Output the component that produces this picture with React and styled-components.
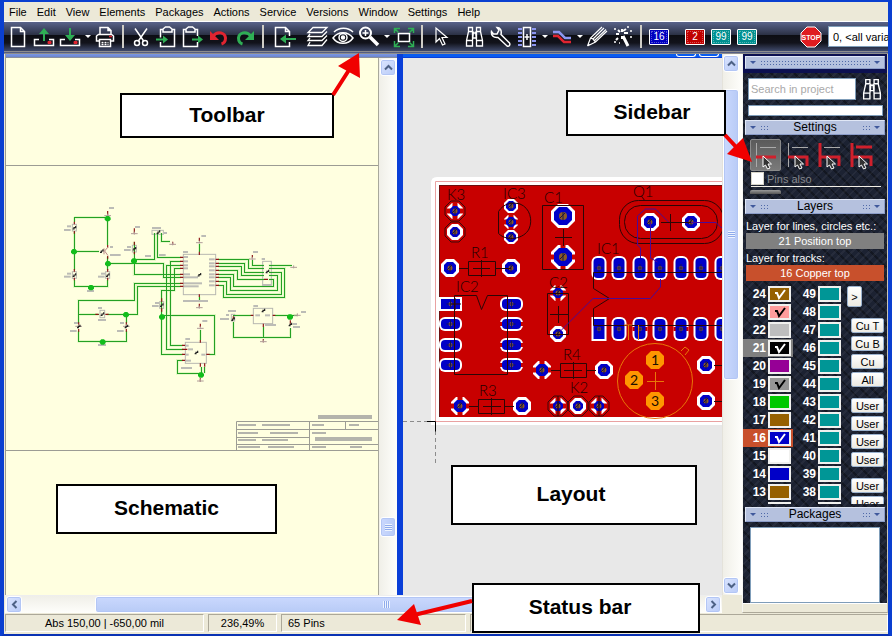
import React from "react";
import styled, { createGlobalStyle, css } from "styled-components";

const Global = createGlobalStyle`
  * { box-sizing: border-box; }
  body { margin: 0; background: #ece9d8; }
  body, button, input, select { font-family: "Liberation Sans", Arial, sans-serif; font-size: 11px; }
  button { margin: 0; padding: 0; cursor: default; }
  svg { display: block; flex: none; }
`;

/* ---------- window frame ---------- */

const Frame = styled.div`
  position: relative;
  display: flex;
  flex-direction: column;
  min-height: 100vh;
  overflow: hidden;
  border: 4px solid #0a3fd0;
  border-top-width: 2px;
  border-bottom: 3px solid #0a32b4;
  background: #ece9d8;
`;

const MenuBar = styled.nav`
  display: flex;
  height: 20px;
  border-bottom: 1px solid #fff;
`;

const MenuItem = styled.button`
  border: 0;
  padding: 0 5px;
  background: none;
  color: #000;
`;

const ToolStrip = styled.div`
  display: flex;
  align-items: center;
  height: 32px;
  padding-left: 1px;
  border-bottom: 3px double #8d8d8d;
  background: linear-gradient(#59638a 0, #2a3044 45%, #0c0d13 46%, #12131b 72%, #3f4a6b 100%);
`;

const ToolButton = styled.button`
  flex: none;
  display: grid;
  place-items: center;
  width: 26px;
  height: 26px;
  border: 0;
  background: none;
`;

const CaretButton = styled.button`
  flex: none;
  display: grid;
  place-items: center;
  width: 9px;
  height: 26px;
  border: 0;
  background: none;
  &::before {
    content: "";
    border: 3px solid transparent;
    border-top-color: #fff;
    border-bottom: 0;
  }
`;

const Separator = styled.span`
  flex: none;
  width: 2px;
  height: 23px;
  margin: 0 4px;
  background: #cfcdc6;
`;

const Gap = styled.span`
  flex: none;
  width: ${(p) => p.$w}px;
`;

const Chip = styled.span`
  display: grid;
  place-items: center;
  width: 20px;
  height: 16px;
  border: 1px solid #fff;
  border-radius: 1px;
  background: ${(p) => p.$color};
  color: #fff;
  font-size: 10px;
  line-height: 12px;
  outline: 1px dotted #ffffff55;
  outline-offset: -3px;
`;

const VariantSelect = styled.select`
  flex: 1;
  min-width: 0;
  height: 21px;
  margin-left: 4px;
  padding: 0 0 0 4px;
  border: 1px solid #7f9db9;
  border-right: 0;
  border-radius: 0;
  background: #fff;
  color: #000;
  appearance: none;
  text-overflow: clip;
`;

/* ---------- work area ---------- */

const Main = styled.div`
  flex: 1;
  display: flex;
  min-height: 0;
`;

const Documents = styled.main`
  flex: 1;
  min-width: 0;
  display: flex;
  flex-direction: column;
  padding-left: 1px;
`;

const Panes = styled.div`
  flex: 1;
  display: grid;
  grid-template-columns: minmax(0, 392fr) minmax(0, 345fr);
  min-height: 0;
`;

const Pane = styled.section`
  display: grid;
  grid-template-columns: minmax(0, 1fr) ${(p) => (p.$active ? 20 : 19)}px;
  grid-template-rows: 4px minmax(0, 1fr);
  border-left: ${(p) => (p.$active ? "6px solid #0a3fd8" : "1px solid #9a9a90")};
  background: #f4f3ee;
`;

const TitleEdge = styled.div`
  display: flex;
  justify-content: flex-end;
  gap: 3px;
  padding-right: 3px;
  grid-column: 1 / ${(p) => (p.$full ? 3 : 2)};
  background: ${(p) => (p.$full ? "linear-gradient(#7b98e2, #6a84d0)" : "#0a5cf0")};
  border-bottom: 1px solid ${(p) => (p.$full ? "#8a8f9c" : "#0a3fd8")};
`;

const TitleButtonEdge = styled.span`
  width: 20px;
  height: 3px;
  border: 1px solid #fff;
  border-top: 0;
  border-radius: 0 0 3px 3px;
`;

const Canvas = styled.div`
  grid-row: 2;
  min-width: 0;
  height: 537px;
  min-height: 100%;
  overflow: hidden;
  background: ${(p) => p.$color};
`;

const VScroll = styled.div`
  grid-column: 2;
  grid-row: ${(p) => (p.$tall ? "1 / 3" : "2")};
  display: flex;
  flex-direction: column;
  padding: 1px ${(p) => (p.$tall ? 3 : 1)}px 1px ${(p) => (p.$tall ? 0 : 1)}px;
  border-left: 1px solid ${(p) => (p.$tall ? "#e4e2da" : "#a8a89c")};
  background: linear-gradient(90deg, #f0efe8, #fefefb);
`;

const scrollFace = css`
  border: 1px solid #fff;
  border-radius: 3px;
  box-shadow: inset 0 0 0 1px #b3c6f5;
`;

const ScrollButton = styled.button`
  ${scrollFace}
  flex: none;
  display: grid;
  place-items: center;
  width: 16px;
  height: 17px;
  background: linear-gradient(135deg, #dbe5fe, #b9cbf8);
`;

const Track = styled.div`
  flex: 1;
  min-width: 0;
  min-height: 0;
  display: flex;
  flex-direction: ${(p) => (p.$h ? "row" : "column")};
`;

const Space = styled.div`
  flex: ${(p) => p.$n} 1 0;
`;

const Thumb = styled.div`
  ${scrollFace}
  flex: ${(p) => p.$n} 1 0;
  display: grid;
  place-items: center;
  background: linear-gradient(${(p) => (p.$h ? "180deg" : "90deg")}, #cad8fe, #b8cbf6);
  &::after {
    content: "";
    width: 7px;
    height: 7px;
    background: repeating-linear-gradient(${(p) => (p.$h ? "90deg" : "180deg")}, #eef4fe 0 1px, #8fabec 1px 2px);
  }
`;

const HScroll = styled.div`
  display: flex;
  height: 18px;
  margin-right: 20px;
  padding: 0 1px;
  border-top: 1px solid #eee;
  background: linear-gradient(#f0efe8, #fefefb);
`;

/* ---------- sidebar ---------- */

const Side = styled.aside`
  flex: none;
  display: flex;
  flex-direction: column;
  width: 146px;
  border-left: 1px solid #f6f6f2;
  border-right: 1px solid #c8c5b8;
  border-bottom: 1px solid #aca899;
  color: #fff;
  background:
    repeating-linear-gradient(135deg, #ffffff0c 0 2px, transparent 2px 6px),
    repeating-linear-gradient(45deg, #00000055 0 2px, transparent 2px 8px),
    #1c2232;
`;

const SideHead = styled.h2`
  display: flex;
  align-items: center;
  justify-content: space-between;
  height: ${(p) => (p.$slim ? 13 : 15)}px;
  margin: 0 2px;
  padding: 0 4px;
  border: 1px solid #e0e7f6;
  border-right-color: #8b9cc8;
  border-bottom-color: #8b9cc8;
  background: #b5c1de;
  color: #000;
  font-size: 12px;
  font-weight: 400;
  line-height: 13px;
`;

const HeadTop = styled.div`
  padding: 2px 0 4px;
  background: #0c1050;
`;

const Dots = styled.span`
  flex: ${(p) => (p.$wide ? 1 : "none")};
  width: 8px;
  height: 6px;
  background-image: radial-gradient(circle, #5069a8 1px, transparent 1px);
  background-size: 3px 3px;
`;

const HeadMark = styled.span`
  display: flex;
  align-items: center;
  gap: 4px;
  flex: ${(p) => (p.$wide ? 1 : "none")};
`;

const Triangle = styled.span`
  border: 3px solid transparent;
  border-top-color: #40599c;
  border-bottom: 0;
`;

const SearchRow = styled.form`
  display: flex;
  align-items: center;
  gap: 5px;
  margin: 4px 4px 0 5px;
`;

const SearchInput = styled.input`
  flex: 1;
  min-width: 0;
  height: 22px;
  padding: 0 2px;
  border: 1px solid #7f9db9;
  background: #fff;
  &::placeholder { color: #a9a9a9; opacity: 1; }
`;

const SearchButton = styled.button`
  width: 22px;
  height: 24px;
  border: 0;
  background: none;
`;

const ResultBox = styled.div`
  height: 11px;
  margin: 4px 4px 4px 5px;
  border: 1px solid #7f9db9;
  background: #fff;
`;

const ModeRow = styled.div`
  display: flex;
  gap: 1px;
  padding: 4px 7px 0;
`;

const ModeButton = styled.button`
  width: 31px;
  height: 32px;
  border: 1px solid ${(p) => (p.$on ? "#8a8a8a" : "transparent")};
  border-radius: 2px;
  background: ${(p) => (p.$on ? "linear-gradient(#5a5a5a, #7a7a7a)" : "none")};
`;

const CheckLabel = styled.label`
  display: flex;
  align-items: center;
  gap: 3px;
  height: 16px;
  margin: 0 6px 0 8px;
  border-bottom: 1px solid #f2efe6;
  color: #85878c;
`;

const CheckBox = styled.input`
  appearance: none;
  width: 13px;
  height: 13px;
  margin: 0;
  border: 1px solid #d8d5c8;
  background: #fff;
`;

const Stub = styled.div`
  width: 31px;
  height: 4px;
  margin: 3px 0 5px 7px;
  border-radius: 2px 2px 0 0;
  background: linear-gradient(#9a9a9a, #555);
`;

const LayerCaption = styled.div`
  height: ${(p) => p.$h}px;
  padding: ${(p) => p.$h - 13}px 0 0 3px;
  line-height: 13px;
  white-space: nowrap;
`;

const LayerBar = styled.button`
  height: 16px;
  margin: 0 3px;
  border: 0;
  background: ${(p) => p.$color};
  color: #fff;
  line-height: 16px;
`;

const LayerList = styled.div`
  display: flex;
  height: 219px;
  margin: 4px 0 3px;
  overflow: hidden;
`;

const LayerColumn = styled.div`
  flex: none;
  width: 50px;
`;

const LayerRow = styled.button`
  display: flex;
  align-items: center;
  justify-content: flex-end;
  gap: 2px;
  width: 50px;
  height: 18px;
  padding-right: 2px;
  border: 0;
  background: ${(p) => p.$row || "none"};
  color: #fff;
  font-size: 12px;
  font-weight: 700;
`;

const Swatch = styled.span`
  width: 23px;
  height: 16px;
  border: 2px solid #f0f0ee;
  background: ${(p) => p.$color};
`;

const SetColumn = styled.div`
  flex: 1;
  display: flex;
  flex-direction: column;
  align-items: flex-end;
  gap: 3px;
  padding: 1px 3px 0 0;
`;

const XpButton = styled.button`
  flex: none;
  width: ${(p) => (p.$narrow ? 15 : 33)}px;
  height: ${(p) => (p.$narrow ? 21 : 15)}px;
  margin: ${(p) => p.$top || 0}px ${(p) => (p.$narrow ? 22 : 0)}px 0 0;
  border: 1px solid #9db4cf;
  border-radius: 2px;
  background: linear-gradient(#fff, #eceae2);
  color: #000;
  line-height: 12px;
`;

const PackageBox = styled.div`
  flex: 1;
  min-height: 76px;
  margin: 5px 7px 0;
  border: 1px solid #7f9db9;
  background: #fff;
`;

const SideFoot = styled.div`
  height: 9px;
  border-top: 1px solid #fff;
  background: #ece9d8;
`;

const StatusBar = styled.footer`
  display: flex;
  gap: 4px;
  height: 21px;
  padding: 1px 0 2px 1px;
`;

const StatusCell = styled.div`
  flex: ${(p) => (p.$w ? "none" : 1)};
  width: ${(p) => p.$w || 0}px;
  padding: 0 6px;
  border: 1px solid #aca899;
  border-right-color: #fff;
  border-bottom-color: #fff;
  line-height: 17px;
  text-align: ${(p) => p.$align || "left"};
`;

/* ---------- callouts lying over the window ---------- */

const Callout = styled.div`
  position: absolute;
  left: ${(p) => p.$x}px;
  top: ${(p) => p.$y}px;
  display: grid;
  place-items: center;
  width: ${(p) => p.$w}px;
  height: ${(p) => p.$h}px;
  padding-left: ${(p) => p.$shift || 0}px;
  padding-right: ${(p) => p.$back || 0}px;
  padding-bottom: 2px;
  border: 2px solid #000;
  background: #fff;
  color: #000;
  font-size: 21px;
  font-weight: 700;
`;

const Arrows = styled.svg`
  position: absolute;
  left: -4px;
  top: -2px;
  pointer-events: none;
`;

/* ---------- icons ---------- */

const G = "#2fae55";
const R = "#e02430";

const Ico = ({ children, w = 1.5 }) => (
  <svg width="26" height="26" viewBox="0 0 26 26" fill="none" stroke="#fff" strokeWidth={w}>{children}</svg>
);
const cursorPath = "M9 4v14l3.500-3.500 3 6.500 2.500-1-3-6.500h5z";

const icons = {
  New: <Ico><path d="M6.500 3.500h9l4 4v15h-13zM15.500 3.500v4h4" /></Ico>,
  Open: <Ico><path d="M8 15.500H3.500v6h19v-6H18" /><path d="M13 17V7" stroke={G} strokeWidth="2" /><path d="M8 10l5-6 5 6z" fill={G} stroke="none" /><path d="M17 17.500h3v2h-3z" fill={R} stroke={R} strokeWidth="1" /></Ico>,
  Save: <Ico><path d="M8 15.500H3.500v6h19v-6H18" /><path d="M13 4v10" stroke={G} strokeWidth="2" /><path d="M8 11h10l-5 6z" fill={G} stroke="none" /><path d="M17 17.500h3v2h-3z" fill={R} stroke={R} strokeWidth="1" /></Ico>,
  Print: <Ico><path d="M8 11V3.500h8l3 3V11M16 3.500v3h3M8 17H4.500v-5l2-1.500h13l2 1.500v5H18" /><path d="M7.500 15.500h11v7h-11z" /><path d="M9.500 18.500h7M9.500 20.500h7" strokeDasharray="2 1" /><path d="M17 12.500h3" stroke={R} /></Ico>,
  Cut: <Ico><path d="M7 4.500l9 13M19 4.500l-9 13" /><circle cx="9" cy="19" r="2.500" /><circle cx="17" cy="19" r="2.500" /></Ico>,
  Copy: <Ico><path d="M9 5.500H6.500v8M6.500 18v4.500h14v-17H18M9 8V5l2.500-2h4L18 5v3z" /><path d="M2 15.500h9" stroke={G} strokeWidth="2" /><path d="M9 11.500l5 4-5 4z" fill={G} stroke="none" /></Ico>,
  Paste: <Ico><path d="M6 5.500H3.500v17h14V18M17.500 12V5.500H15M6 8V5l2.500-2h4L15 5v3z" /><path d="M12 15.500h9" stroke={G} strokeWidth="2" /><path d="M18 11.500l5 4-5 4z" fill={G} stroke="none" /></Ico>,
  Undo: <Ico><path d="M7 12C12 6 19 9 19.500 14c0 3-1 5-4 6" stroke={R} strokeWidth="3" /><path d="M4 7v9h9z" fill={R} stroke="none" /></Ico>,
  Redo: <Ico><path d="M19 12C14 6 7 9 6.500 14c0 3 1 5 4 6" stroke={G} strokeWidth="3" /><path d="M22 7v9h-9z" fill={G} stroke="none" /></Ico>,
  Import: <Ico><path d="M17.500 12V7.500l-4-4h-10v19h14V18M13.500 3.500v4h4" /><path d="M12 15h12" stroke={G} strokeWidth="2" /><path d="M14 10.500v9L8 15z" fill={G} stroke="none" /></Ico>,
  Layers: <Ico w="1.300"><path d="M9 3.500h14l-5 5H4zM6 10l-2 2.500h14l5-5M6 14l-2 2.500h14l5-5M6 18l-2 3.500h14l5-6" /></Ico>,
  View: <Ico><path d="M4 8c5-5 14-5 19 0M3 14c5-7 15-7 20 0-5 7-15 7-20 0z" /><circle cx="13" cy="13.500" r="4" /><circle cx="13" cy="13.500" r="1.500" fill="#fff" /></Ico>,
  Zoom: <Ico><circle cx="9.500" cy="9" r="5.500" strokeWidth="2" /><path d="M6.500 9h6M9.500 6v6" /><path d="M14 13l8 8" strokeWidth="3.500" /></Ico>,
  Fit: <Ico><path d="M7.500 9.500h11v8h-11z" /><path d="M3.500 9V4.500H9M3.500 4.500l4 4M17 4.500h5.500V9M22.500 4.500l-4 4M3.500 17v5.500H9M3.500 22.500l4-4M17 22.500h5.500V17M22.500 22.500l-4-4" stroke={G} /></Ico>,
  Select: <Ico w="1.200"><path d={cursorPath} /></Ico>,
  Find: <Ico w="1.300"><path d="M6.500 3.500h4v4h-4zM14.500 3.500h4v4h-4zM6.500 7.500l-2 9v5.500h6v-5.500l1-9M18.500 7.500l2 9v5.500h-6v-5.500l-1-9M10.500 9h4v5h-4zM4.500 16.500h6M14.500 16.500h6" /></Ico>,
  Tools: <Ico><path d="M9 3.500L11 6l-2 4-3.500 0-2-2.500C3 11 5 14 10 13.500l9 8.500c2 1 3.500-1 2.500-3L13 10.500C14 6 12 3.500 9 3.500z" /></Ico>,
  Part: <Ico><path d="M9.500 3.500h7v19h-7z" /><path d="M13 10v6M10.500 13h5" /><path d="M4 5h4M4 9h4M4 13h4M4 17h4M4 21h4M18 5h4M18 9h4M18 13h4M18 17h4M18 21h4" stroke="#8c96f0" strokeWidth="2" /></Ico>,
  Track: <Ico w="2"><path d="M4 8h6l6 6h6" stroke="#8c96f0" strokeWidth="2.500" /><path d="M4 12h5l6 6h7" stroke={R} strokeWidth="2.500" /></Ico>,
  Draw: <Ico w="1.200"><path d="M3.500 22l3-8L18 3M3.500 22l8-4L23 7M6.500 14l2.500 1 2.500 3M9 15L20 4M10 17L22 5.500M4 20l2 1" /></Ico>,
  Magic: <Ico><path d="M13 12l5 10" strokeWidth="3" /><path d="M12 5v3M12 12v3M6 10h3M13 7l3-2M8 14l-2 2M8 6l2 2M14 9h4" strokeWidth="2" /><path d="M4 5h2M17 3h2M20 7h2M4 18h2M9 19h1M20 13h2" strokeWidth="1.500" /></Ico>,
};

const Tool = ({ name }) => <ToolButton aria-label={name} title={name}>{icons[name]}</ToolButton>;
const LayerChip = ({ color, n }) => <ToolButton aria-label={`Layer ${n}`}><Chip $color={color}>{n}</Chip></ToolButton>;

const StopIcon = () => (
  <svg width="22" height="22" viewBox="0 0 22 22">
    <path d="M7 1h8l6 6v8l-6 6H7l-6-6V7z" fill="#df1c20" stroke="#fff" />
    <text x="11" y="14" fill="#fff" fontSize="7" fontWeight="700" textAnchor="middle">STOP</text>
  </svg>
);

const Chevron = ({ d }) => (
  <svg width="9" height="9" viewBox="0 0 9 9" fill="none" stroke="#4d6185" strokeWidth="2"><path d={d} /></svg>
);
const up = "M1 6.500L4.500 3 8 6.500";
const down = "M1 2.500L4.500 6 8 2.500";
const left = "M6.500 1L3 4.500 6.500 8";
const right = "M2.500 1L6 4.500 2.500 8";

const modeLines = [
  { grey: "M5.500 3v24M9 7.500h16", red: "M5 17h20" },
  { grey: "M5.500 3v24M9 7.500h16", red: "M5 17h19v9" },
  { grey: "M9 7.500h16", red: "M5 3v24M5 17h19v9" },
  { grey: "", red: "M5 3v24M5 17h19v9M9 7h16" },
];

const ModeIcon = ({ grey, red }) => (
  <svg width="29" height="30" viewBox="0 0 29 30" fill="none">
    <path d={grey} stroke="#aaa" />
    <path d={red} stroke="#d0202c" strokeWidth="3" />
    <path d="M12 16v11l2.500-2 2 4 2.500-1-2-4h3.500z" fill="#333" stroke="#fff" />
  </svg>
);

/* ---------- schematic drawing ---------- */

const wires = [
  "M43 67H143V150M43 67V80M43 112V225M42 169H118M143 185V225M43 255V274H143V255",
  "M143 205H310V247H362M222 198V140M222 198V239H362M222 193H284V114M292 114V187H362M304 114V139H330",
  "M362 274H232V358H140M56 358H116M56 358V316H223V265H362M56 358V385M56 408V439H199V408M199 385V358",
  "M362 199H331V451H368M362 211H320V463H370M362 220H343V286H305V478H368M305 361H464V478H448",
  "M421 405V435M368 496H352V535H424V515M434 515V535M418 146V170M418 305V322",
  "M475 193H566V220H612M475 205H554V232H612M475 214H543V241H612M475 226H532V253H612",
  "M475 238H521V274H640V253H626M475 247H511V286H652V241H626M475 259H500V298H663V232H626M475 271H490V307H674V220H626",
  "M577 195V211H612M626 211H695M520 361H572M520 380V427H691V400M610 395V427M645 361H712",
];
const nodes = [[143, 71], [42, 170], [144, 206], [222, 198], [93, 278], [198, 359], [128, 441], [306, 366], [423, 540], [690, 366]];
const leads = "M43 80v8M43 108v8M43 222v8M43 248v8M143 48v12M143 150v8M143 183v8M143 222v8M143 248v8M223 100v14M223 140v10M223 170v8M106 358h10M136 358h10M56 382v8M56 402v8M199 382v8M199 402v8M305 310v10M305 340v10M360 187h10M360 199h10M360 211h10M360 220h10M360 238h10M360 247h10M360 265h10M360 274h10M467 193h10M467 205h10M467 214h10M467 226h10M467 238h10M467 247h10M467 259h10M467 271h10M418 170v10M418 298v8M418 128v10M366 451h10M366 463h16M366 478h10M366 496h10M439 478h10M421 435v8M421 505v10M434 505v10M421 386v10M338 140v10M577 180v10M612 253h12M572 361h8M638 361h8M610 386v10M520 364v8M691 376v10M421 550v10M610 432v10M418 326v10";
const labels = [
  [147, 36, 15], [21, 91, 12], [12, 102, 20], [150, 153, 9], [150, 177, 32], [21, 233, 12], [12, 242, 20], [123, 233, 12], [114, 242, 20],
  [81, 285, 21], [225, 93, 15], [201, 153, 12], [192, 162, 20], [276, 96, 27], [312, 111, 9], [255, 180, 18], [297, 177, 20], [424, 120, 14],
  [369, 168, 15], [369, 315, 75], [114, 336, 12], [114, 372, 24], [42, 381, 12], [30, 405, 20], [180, 381, 12], [171, 405, 20], [114, 447, 24],
  [285, 321, 12], [276, 330, 20], [376, 429, 14], [363, 516, 33], [427, 375, 15], [579, 168, 15], [605, 189, 10], [606, 267, 27],
  [504, 345, 24], [498, 357, 9], [480, 369, 27], [580, 330, 14], [615, 387, 33], [723, 348, 15], [699, 384, 12], [699, 393, 21],
  [372, 183, 12], [372, 196, 12], [372, 208, 12], [372, 217, 12], [372, 235, 18], [372, 244, 42], [372, 262, 54], [372, 271, 44],
  [447, 190, 17], [447, 202, 17], [447, 211, 17], [447, 223, 17], [447, 235, 17], [447, 244, 17], [447, 256, 17], [447, 268, 17],
  [376, 449, 10], [384, 460, 15], [376, 476, 10], [376, 494, 17], [424, 476, 12], [586, 358, 14], [615, 358, 15],
];
const parts = [[37, 88, 12, 20], [37, 230, 12, 20], [137, 230, 12, 20], [217, 151, 12, 20], [276, 106, 34, 12], [370, 178, 97, 121], [608, 199, 26, 72],
  [299, 320, 12, 20], [376, 442, 63, 63], [580, 340, 58, 46], [514, 358, 10, 20], [120, 346, 14, 22]];
const grounds = [[143, 62], [223, 116], [338, 148], [418, 143], [418, 338], [421, 400], [577, 192], [701, 217], [610, 440], [712, 361], [421, 558], [56, 394], [199, 394]];
const ticks = [[43, 98], [43, 240], [143, 240], [223, 161], [295, 111], [125, 168], [418, 239], [305, 330], [409, 472], [622, 229], [519, 372], [610, 346], [127, 357], [56, 394], [199, 394], [691, 388]];

const Schematic = () => (
  <svg width="374" height="537" viewBox="6 58 374 537" role="img" aria-label="Schematic sheet">
    <path d="M5 165.500h375M5 450.500h375" stroke="#9c9c94" />
    <g fill="none" stroke="#9c9c94">
      <path d="M236.500 450v-28.500H380M236.500 429.500H380M236.500 437.500h73M236.500 444.500H380M309.500 421v29M345.500 421v9" />
    </g>
    <g fill="#b4b4ac">
      <path d="M318 415h54v4h-54zM315 437h57v4h-57zM238 424h18v2h-18zM262 424h28v2h-28zM312 424h12v2h-12zM349 424h10v2h-10zM238 432h20v2h-20zM270 432h28v2h-28zM312 432h14v2h-14zM238 439h18v2h-18zM262 439h26v2h-26zM238 446h22v2h-22zM268 446h26v2h-26zM312 446h14v2h-14zM350 446h12v2h-12z" />
    </g>
    <svg x="60" y="195" width="250" height="195" viewBox="0 0 750 585">
      <g fill="none">
        {wires.map((d) => <path key={d} d={d} stroke="#e0f8c0" strokeWidth="8" />)}
        {parts.map(([x, y, w, h]) => <rect key={`${x}-${y}`} x={x} y={y} width={w} height={h} stroke="#b8b8b0" strokeWidth="3" />)}
        {wires.map((d) => <path key={d} d={d} stroke="#24a024" strokeWidth="3" shapeRendering="crispEdges" />)}
        <path d={leads} stroke="#8c1414" strokeWidth="3.500" />
      </g>
      <path d="M132 160v18M134 168l10-12M134 168l10 14" stroke="#b88" strokeWidth="3" fill="none" />
      {labels.map(([x, y, w]) => <rect key={`${x}-${y}`} x={x} y={y} width={w} height="6" fill="#bcbcb6" />)}
      {grounds.map(([x, y]) => <path key={`${x}-${y}`} d={`M${x - 10} ${y}h20M${x} ${y - 6}v9`} stroke="#b09c98" strokeWidth="3" />)}
      {ticks.map(([x, y]) => <path key={`${x}-${y}`} d={`M${x - 5} ${y + 4}h4v-4h5v-5`} stroke="#222" strokeWidth="3.500" fill="none" />)}
      {nodes.map(([x, y]) => <path key={`${x}-${y}`} d={`M${x - 4} ${y - 8}h8l5 5v6l-5 5h-8l-5-5v-6z`} fill="#12bd1c" />)}
    </svg>
  </svg>
);

/* ---------- board drawing ---------- */

const oct = (x, y, r) => {
  const k = Math.round(r * 0.42);
  return `M${x - k} ${y - r}h${2 * k}L${x + r} ${y - k}v${2 * k}L${x + k} ${y + r}h${-2 * k}L${x - r} ${y + k}v${-2 * k}z`;
};

const Pad = ({ x, y, r = 9, inner = 6, relief }) => (
  <g>
    <path d={oct(x, y, r)} fill="#fff" />
    {relief && <path d={`M${x - r} ${y}h${2 * r}M${x} ${y - r}v${2 * r}`} stroke="#c80000" strokeWidth="5" />}
    <path d={oct(x, y, inner)} fill="#0000c8" />
    <circle cx={x} cy={y} r={inner > 7 ? 4 : 2.5} fill="#8a5a28" />
    <path d={`M${x - 3} ${y + 2}l5-5M${x} ${y - 4}v8`} stroke="#1a1640" />
  </g>
);

const LongPad = ({ x, y, wide, square, relief }) => {
  const w = wide ? 23 : 15;
  const h = wide ? 14 : 24;
  return (
    <g>
      <rect x={x - w / 2} y={y - h / 2} width={w} height={h} rx={square ? 0 : 6} fill="#fff" />
      {relief && <path d={`M${x - w / 2} ${y}h${w}`} stroke="#c80000" strokeWidth="4" />}
      <rect x={x - w / 2 + 2} y={y - h / 2 + 2} width={w - 4} height={h - 4} rx={square ? 0 : 4} fill="#0000c8" />
      <circle cx={x} cy={y} r="2" fill="#9a6440" />
      <path d={`M${x - 4} ${y}h8M${x} ${y - 4}v8`} stroke="#161650" />
    </g>
  );
};

const roundPads = [
  { x: 455, y: 211, r: 8, inner: 5, relief: true }, { x: 455, y: 232, r: 8, inner: 5 },
  { x: 511, y: 206, r: 7, inner: 5 }, { x: 511, y: 222, r: 7, inner: 5, relief: true }, { x: 511, y: 237, r: 7, inner: 5 },
  { x: 563, y: 216, r: 12, inner: 9 }, { x: 563, y: 257, r: 12, inner: 9, relief: true },
  { x: 450, y: 268 }, { x: 511, y: 268 },
  { x: 558, y: 293, r: 8, inner: 5, relief: true }, { x: 558, y: 334, r: 8, inner: 5 },
  { x: 542, y: 370, relief: true }, { x: 604, y: 370 },
  { x: 460, y: 406, relief: true }, { x: 522, y: 406 },
  { x: 558, y: 406, r: 8, inner: 5, relief: true }, { x: 578, y: 406, r: 8, inner: 5 }, { x: 599, y: 406, r: 8, inner: 5, relief: true },
  { x: 650, y: 222 }, { x: 691, y: 222 }, { x: 706, y: 365 }, { x: 706, y: 401 },
];
const names = [["K3", 447, 200], ["IC3", 503, 199], ["C1", 544, 203], ["R1", 471, 258], ["IC2", 456, 292], ["C2", 549, 288], ["Q1", 633, 197], ["IC1", 597, 254], ["R4", 563, 360], ["R3", 479, 396], ["K2", 570, 393]];
const outlines = [oct(455, 211, 10), oct(455, 232, 10), oct(558, 406, 10), oct(599, 406, 10), oct(578, 406, 10)];
const silk = [
  "M498.500 211.500v22C507 242 524 239 529 229c4-9 1-21-9-25-8-2-16-1-21.500 7.500z",
  "M542.500 205.500h41v64h-41zM555 237.500h17M563.500 229v17",
  "M459 268.500h9M495 268.500h16M468.500 261.500h27v14h-27zM473 268.500h17M481.500 260v17",
  "M454.500 374.500V295.500h22l5 14 6-14h20v79zM451 304h10M455 298v12",
  "M547.500 293.500h21v41h-21zM550 314.500h18M558.500 306v17",
  "M551 370.500h9M587 370.500h9M560.500 363.500h26v14h-26zM564 370.500h18M573.500 362v17",
  "M469 406.500h9M505 406.500h9M478.500 399.500h26v14h-26zM483 406.500h18M491.500 398v17",
  "M661 222.500h55M670.500 214v17",
  "M724 272.500H593.500v16l16 10-16 10v17H724",
  "M714 365.500h9M714 401.500h9M599 396v20M558 396v20",
];

const Board = () => (
  <svg width="322" height="537" viewBox="403 58 322 537" role="img" aria-label="Board layout">
    <path d="M726 177H437q-6 0-6 6v242h295z" fill="#fff" />
    <path d="M726 181.500H435.500V421.500H726" fill="none" stroke="#e9a2a2" />
    <path d="M439 185h287v232H439z" fill="#c80000" />
    <path d="M726 185.500H439.500V417" fill="none" stroke="#6c1010" />
    <g fill="none" stroke="#3c0808">{outlines.map((d) => <path key={d} d={d} />)}</g>
    {roundPads.map((p) => <Pad key={`${p.x}-${p.y}`} {...p} />)}
    {[304, 324, 345, 365].map((y, i) => (
      <g key={y}>
        <LongPad wide x={450.5} y={y} square={i === 0} />
        <LongPad wide x={511.5} y={y} relief={i > 0} />
      </g>
    ))}
    {[599, 619, 640, 660, 681, 701, 722].map((x, i) => (
      <g key={x}>
        <LongPad x={x} y={268} />
        <LongPad x={x} y={329} square={i === 0} relief={i === 2 || i === 4} />
      </g>
    ))}
    <g fill="none" stroke="#2c0606">
      {silk.map((d) => <path key={d} d={d} />)}
      <rect x="619.500" y="200.500" width="104" height="43" rx="19" />
      <rect x="624.500" y="205.500" width="93" height="33" rx="16" />
    </g>
    <g fill="none" stroke="#4a0a96">
      <path d="M640.500 258v-10l-3-3v-29l8-7h10l13 13M650.500 222v36l7 4M660.500 279v8l-10 11.500H593l-33 33M691 222.500h25l5 5h5" />
    </g>
    <g fill="none" stroke="#e87808">
      <circle cx="655" cy="381" r="37.500" />
      <path d="M647 381.500h17M655.500 372v18M681 351l4-4 4 3-4 5M624 325h8M628.500 325v15M638.500 325v15" />
    </g>
    {[[655, 360, 1], [634, 380, 2], [655, 401, 3]].map(([x, y, n]) => (
      <g key={n}>
        <path d={oct(x, y, 9)} fill="#ff9600" />
        <text x={x} y={y + 5} textAnchor="middle" fontSize="14" fontFamily="Lato, sans-serif" fill="#201000">{n}</text>
      </g>
    ))}
    <g fill="#200000" fontSize="15" fontFamily="Lato, sans-serif" fontWeight="300">
      {names.map(([t, x, y]) => <text key={t} x={x} y={y}>{t}</text>)}
    </g>
    <path d="M403 421.500h24M435.500 431v34" fill="none" stroke="#8c8c8c" strokeDasharray="4 3" />
    <path d="M427 421.500h8.500v10" fill="none" stroke="#000" />
  </svg>
);

/* ---------- sidebar data ---------- */

const layers = [
  { n: 24, c: "#966000", tick: "#fff" }, { n: 23, c: "#ff9c9c", tick: "#000" }, { n: 22, c: "#bebebe" },
  { n: 21, c: "#000", tick: "#fff", row: "#808080" }, { n: 20, c: "#960096" }, { n: 19, c: "#969696", tick: "#000" },
  { n: 18, c: "#00c800" }, { n: 17, c: "#966000" }, { n: 16, c: "#0000c8", tick: "#fff", row: "#c8502c" },
  { n: 15, c: "#fff" }, { n: 14, c: "#0000c8" }, { n: 13, c: "#966000" },
];
const tealLayers = [49, 48, 47, 46, 45, 44, 43, 42, 41, 40, 39, 38].map((n) => ({ n, c: "#009696" }));

const LayerItem = ({ n, c, tick, row }) => (
  <LayerRow $row={row} aria-label={n ? `Layer ${n}` : "More layers"}>
    {n}
    <Swatch $color={c}>
      {tick && <svg width="19" height="12" viewBox="0 0 19 12" fill="none" stroke={tick} strokeWidth="2"><path d="M5 5h2l2 5 6-8" /></svg>}
    </Swatch>
  </LayerRow>
);

const Head = ({ children }) => (
  <SideHead>
    <HeadMark><Triangle /><Dots /></HeadMark>
    {children}
    <HeadMark><Dots /><Triangle /></HeadMark>
  </SideHead>
);

const menus = ["File", "Edit", "View", "Elements", "Packages", "Actions", "Service", "Versions", "Window", "Settings", "Help"];

export default function App() {
  return (
    <Frame>
      <Global />
      <MenuBar>{menus.map((m) => <MenuItem key={m}>{m}</MenuItem>)}</MenuBar>

      <ToolStrip>
        <Tool name="New" /><Tool name="Open" /><Tool name="Save" /><CaretButton aria-label="Save options" /><Tool name="Print" />
        <Separator />
        <Tool name="Cut" /><Tool name="Copy" /><Tool name="Paste" /><Tool name="Undo" /><Tool name="Redo" />
        <Separator />
        <Gap $w={4} /><Tool name="Import" /><Gap $w={6} />
        <Tool name="Layers" /><Tool name="View" /><Tool name="Zoom" /><CaretButton aria-label="Zoom options" /><Tool name="Fit" />
        <Separator />
        <Tool name="Select" /><Gap $w={9} />
        <Tool name="Find" /><Tool name="Tools" /><Tool name="Part" /><CaretButton aria-label="Part options" />
        <Tool name="Track" /><CaretButton aria-label="Track options" /><Tool name="Draw" /><Tool name="Magic" />
        <Separator />
        <LayerChip color="#0000c0" n="16" /><Gap $w={10} />
        <LayerChip color="#c00000" n="2" /><LayerChip color="#009090" n="99" /><LayerChip color="#009090" n="99" />
        <Gap $w={38} />
        <ToolButton aria-label="Stop"><StopIcon /></ToolButton>
        <VariantSelect aria-label="Variant"><option>0, &lt;all variants&gt;</option></VariantSelect>
      </ToolStrip>

      <Main>
        <Documents>
          <Panes>
            <Pane>
              <TitleEdge $full />
              <Canvas $color="#ffffe0"><Schematic /></Canvas>
              <VScroll>
                <ScrollButton aria-label="Scroll up"><Chevron d={up} /></ScrollButton>
                <Track><Space $n={444} /><Thumb $n={19} /><Space $n={57} /></Track>
              </VScroll>
            </Pane>
            <Pane $active>
              <TitleEdge><TitleButtonEdge /><TitleButtonEdge /></TitleEdge>
              <Canvas $color="#e8e8e8"><Board /></Canvas>
              <VScroll $tall>
                <ScrollButton aria-label="Scroll up"><Chevron d={up} /></ScrollButton>
                <Track><Space $n={17} /><Thumb $n={290} /><Space $n={198} /></Track>
                <ScrollButton aria-label="Scroll down"><Chevron d={down} /></ScrollButton>
              </VScroll>
            </Pane>
          </Panes>
          <HScroll>
            <ScrollButton aria-label="Scroll left"><Chevron d={left} /></ScrollButton>
            <Track $h><Space $n={73} /><Thumb $h $n={582} /><Space $n={27} /></Track>
            <ScrollButton aria-label="Scroll right"><Chevron d={right} /></ScrollButton>
          </HScroll>
        </Documents>

        <Side>
          <HeadTop>
            <SideHead $slim>
              <HeadMark $wide><Triangle /><Dots $wide /><Triangle /></HeadMark>
            </SideHead>
          </HeadTop>
          <SearchRow>
            <SearchInput aria-label="Search in project" placeholder="Search in project" />
            <SearchButton type="button" aria-label="Search">
              <svg width="22" height="24" viewBox="2 1 21 23" fill="none" stroke="#fff" strokeWidth="1.300">{icons.Find.props.children}</svg>
            </SearchButton>
          </SearchRow>
          <ResultBox />
          <Head>Settings</Head>
          <ModeRow>
            {modeLines.map((m, i) => (
              <ModeButton key={i} $on={i === 0} aria-label={`Track mode ${i + 1}`}><ModeIcon {...m} /></ModeButton>
            ))}
          </ModeRow>
          <CheckLabel><CheckBox type="checkbox" />Pins also</CheckLabel>
          <Stub />
          <Head>Layers</Head>
          <LayerCaption $h={19}>Layer for lines, circles etc.:</LayerCaption>
          <LayerBar $color="#808080">21 Position top</LayerBar>
          <LayerCaption $h={16}>Layer for tracks:</LayerCaption>
          <LayerBar $color="#c8502c">16 Copper top</LayerBar>
          <LayerList>
            <LayerColumn>{layers.map((l) => <LayerItem key={l.n} {...l} />)}<LayerItem c="#fff" /></LayerColumn>
            <LayerColumn>{tealLayers.map((l) => <LayerItem key={l.n} {...l} />)}<LayerItem c="#009696" /></LayerColumn>
            <SetColumn>
              <XpButton $narrow>&gt;</XpButton>
              <XpButton $top={8}>Cu T</XpButton>
              <XpButton>Cu B</XpButton>
              <XpButton>Cu</XpButton>
              <XpButton>All</XpButton>
              <XpButton $top={8}>User</XpButton>
              <XpButton>User</XpButton>
              <XpButton>User</XpButton>
              <XpButton>User</XpButton>
              <XpButton $top={8}>User</XpButton>
              <XpButton>User</XpButton>
            </SetColumn>
          </LayerList>
          <Head>Packages</Head>
          <PackageBox />
          <SideFoot />
        </Side>
      </Main>

      <StatusBar>
        <StatusCell $w={199} $align="center">Abs 150,00 | -650,00 mil</StatusCell>
        <StatusCell $w={69} $align="center">236,49%</StatusCell>
        <StatusCell $w={185}>65 Pins</StatusCell>
        <StatusCell />
      </StatusBar>

      <Callout $x={116} $y={91} $w={214} $h={45}>Toolbar</Callout>
      <Callout $x={562} $y={88} $w={160} $h={46} $shift={12}>Sidebar</Callout>
      <Callout $x={52} $y={482} $w={221} $h={50}>Schematic</Callout>
      <Callout $x={447} $y={463} $w={246} $h={60} $back={6}>Layout</Callout>
      <Callout $x={468} $y={581} $w={228} $h={50} $back={12}>Status bar</Callout>
      <Arrows width="892" height="636" viewBox="0 0 892 636" aria-hidden="true">
        <path d="M333 95L349 70M725 135L738 149M472 601L414 615" stroke="#f00000" strokeWidth="4" />
        <path d="M359 53L338 66 360 78zM752 162L743 138 727 154zM397 620L414 604 421 625z" fill="#f00000" />
      </Arrows>
    </Frame>
  );
}
